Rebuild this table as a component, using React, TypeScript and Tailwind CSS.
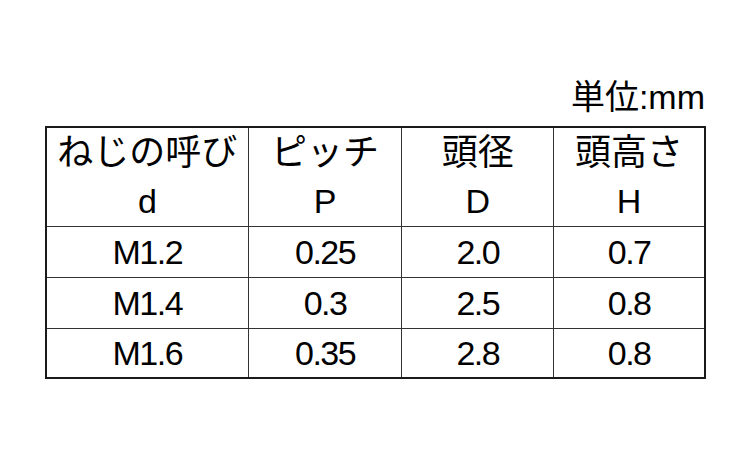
import React from "react";

const jp = { fontFamily: '"Liberation Sans", "Noto Sans CJK JP", sans-serif' };

const rows = [
  ["M1.2", "0.25", "2.0", "0.7"],
  ["M1.4", "0.3", "2.5", "0.8"],
  ["M1.6", "0.35", "2.8", "0.8"],
];

const header: [string, string][] = [
  ["ねじの呼び", "d"],
  ["ピッチ", "P"],
  ["頭径", "D"],
  ["頭高さ", "H"],
];

const colW = ["w-[202px]", "w-[154px]", "w-[152px]", "w-[150px]"];
const rowH = ["h-[51px]", "h-[51px]", "h-[48px]"];

export default function App() {
  return (
    <div className="w-[750px] h-[450px] bg-white text-black" style={jp}>
      <div className="pt-[80px] pl-[45px]">
        <div className="w-[661px] flex justify-end text-[34px] leading-[34px] mb-[12px] pr-[1px]">
          単位:mm
        </div>
        <div className="w-[661px] border-2 border-[#1a1a1a] flex flex-col">
          <div className="flex h-[99px] border-b border-[#333]">
            {header.map((h, i) => (
              <div
                key={i}
                className={`${colW[i]} flex flex-col items-center ${i < 3 ? "border-r border-[#333]" : ""}`}
              >
                <div className="h-[49px] flex items-center justify-center text-[36px] leading-none pt-[2px]">
                  {h[0]}
                </div>
                <div className="h-[50px] flex items-center justify-center text-[34px] leading-none">
                  {h[1]}
                </div>
              </div>
            ))}
          </div>
          {rows.map((r, ri) => (
            <div
              key={ri}
              className={`flex ${rowH[ri]} ${ri < 2 ? "border-b border-[#333]" : ""}`}
            >
              {r.map((c, ci) => (
                <div
                  key={ci}
                  className={`${colW[ci]} flex items-center justify-center text-[34px] leading-none tracking-[-1.5px] ${ci < 3 ? "border-r border-[#333]" : ""}`}
                >
                  {c}
                </div>
              ))}
            </div>
          ))}
        </div>
      </div>
    </div>
  );
}
